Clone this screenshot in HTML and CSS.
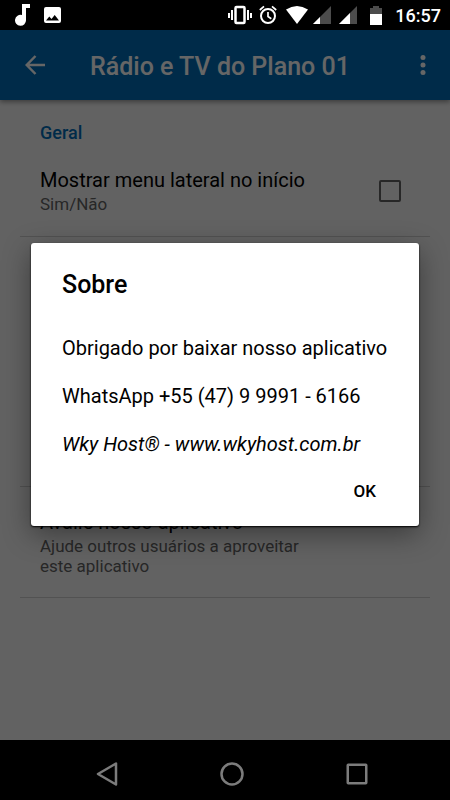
FILE: index.html
```html
<!DOCTYPE html>
<html lang="pt-BR">
<head>
<meta charset="utf-8">
<meta name="viewport" content="width=device-width, initial-scale=1">
<title>Rádio e TV do Plano 01</title>
<link rel="stylesheet" href="styles.css">
</head>
<body>
<div class="status">
  <svg class="note" width="16" height="22" viewBox="0 0 16 22"><path fill="#fff" d="M7 0h8v4h-4v12a5.500 5.500 0 1 1-4-5z"/></svg>
  <svg class="photo" width="17" height="17" viewBox="0 0 17 17"><path fill="#fff" fill-rule="evenodd" d="M2 0h13q2 0 2 2v12q0 2-2 2H2q-2 0-2-2V2q0-2 2-2zM2 13.500h13l-4.300-5.500-3.200 4-2.200-2.500z"/></svg>
  <span class="grow"></span>
  <svg class="vibrate" width="24" height="20" viewBox="0 0 24 20"><path fill="none" stroke="#fff" stroke-width="2" d="M1 8v5M4 5v10M20 5v10M23 8v5"/><rect x="7.500" y="2" width="9" height="16" rx="1" fill="none" stroke="#fff" stroke-width="2.500"/></svg>
  <svg class="alarm" width="18" height="20" viewBox="0 0 18 20"><g fill="none" stroke="#fff" stroke-width="2"><circle cx="9" cy="11" r="7"/><path d="M.8 5 5 1.400M17.200 5 13 1.400M9 7v4.500l3.300 2.200" stroke-width="1.700"/></g></svg>
  <svg class="wifi" width="22" height="18" viewBox="0 0 22 18"><path fill="#fff" d="M0 3.500Q11-3.500 22 3.500L11 18z"/></svg>
  <svg class="signal" width="18" height="18" viewBox="0 0 18 18"><path fill="#4c4c4c" d="M18 0v18H0z"/><path fill="#fff" d="M7 11v7H0z"/></svg>
  <svg class="signal" width="18" height="18" viewBox="0 0 18 18"><path fill="#4c4c4c" d="M18 0v18H0z"/><path fill="#fff" d="M11 7v11H0z"/></svg>
  <svg class="battery" width="12" height="19" viewBox="0 0 12 19"><path fill="#4c4c4c" d="M3 0h6v2h3v6H0V2h3z"/><path fill="#fff" d="M0 8h12v11H0z"/></svg>
  <time>16:57</time>
</div>
<div class="app">
  <header class="bar">
    <button class="icon" aria-label="Voltar"><svg width="20" height="20" viewBox="0 0 20 20"><path fill="none" stroke="#fff" stroke-width="2.500" d="M20 10H2M10.500 1 1.700 10l8.800 9"/></svg></button>
    <h1>Rádio e TV do Plano 01</h1>
    <button class="icon" aria-label="Mais opções"><svg width="6" height="20" viewBox="0 0 6 20"><g fill="#fff"><circle cx="3" cy="2.500" r="2.500"/><circle cx="3" cy="10" r="2.500"/><circle cx="3" cy="17.500" r="2.500"/></g></svg></button>
  </header>
  <main>
    <h2>Geral</h2>
    <label class="row toggle" for="menu">
      <span><span class="name">Mostrar menu lateral no início</span><span class="hint">Sim/Não</span></span>
      <input type="checkbox" id="menu">
    </label>
    <div class="row spacer"></div>
    <div class="row">
      <span class="name">Avalie nosso aplicativo</span>
      <span class="hint">Ajude outros usuários a aproveitar este aplicativo</span>
    </div>
  </main>
  <div class="scrim">
    <section class="dialog" role="dialog" aria-labelledby="about">
      <h2 id="about">Sobre</h2>
      <p>Obrigado por baixar nosso aplicativo</p>
      <p>WhatsApp +55 (47) 9 9991 - 6166</p>
      <p><em>Wky Host® - www.wkyhost.com.br</em></p>
      <div class="actions"><button>OK</button></div>
    </section>
  </div>
</div>
<nav class="keys">
  <button aria-label="Voltar"><svg width="24" height="26" viewBox="0 0 24 26"><path fill="none" stroke="#7c7c7c" stroke-width="2.500" stroke-linejoin="round" d="M21 2.500v21L3 13z"/></svg></button>
  <button aria-label="Início"><svg width="24" height="24" viewBox="0 0 24 24"><circle cx="12" cy="12" r="10.500" fill="none" stroke="#7c7c7c" stroke-width="2.500"/></svg></button>
  <button aria-label="Recentes"><svg width="22" height="22" viewBox="0 0 22 22"><rect x="1.750" y="1.750" width="18.500" height="18.500" rx=".5" fill="none" stroke="#7c7c7c" stroke-width="2.500"/></svg></button>
</nav>
</body>
</html>
```
FILE: styles.css
```css
* { box-sizing: border-box; }
body {
  margin: 0;
  min-height: 100vh;
  display: flex;
  flex-direction: column;
  background: #000;
  color: #000;
  font-family: Roboto, sans-serif;
}
h1, h2, p { margin: 0; font-weight: 500; }
button { border: 0; padding: 0; background: none; font: inherit; color: inherit; }
svg { display: block; flex: none; }

.status {
  height: 30px;
  padding: 0 9px 0 15px;
  display: flex;
  align-items: center;
  color: #fff;
}
.photo { margin-left: 13px; }
.grow { flex: 1; }
.alarm { margin-left: 7px; }
.wifi { margin-left: 9px; }
.signal { margin-left: 5px; }
.signal + .signal { margin-left: 8px; }
.battery { margin-left: 13px; }
.status time { margin-left: 13px; font-size: 18px; font-weight: 500; }

.app {
  flex: 1;
  position: relative;
  background: #f6f6f6;
}
.bar {
  height: 70px;
  padding: 0 20px 0 25px;
  display: flex;
  align-items: center;
  background: #006cb7;
  color: #fff;
  box-shadow: 0 2px 5px rgba(0, 0, 0, .4);
}
.icon { min-width: 15px; display: flex; justify-content: center; }
.bar h1 { flex: 1; margin-left: 45px; padding-top: 3px; font-size: 25px; line-height: 30px; }

main { padding: 21px 20px; }
main h2 {
  padding: 0 20px;
  font-size: 18px;
  line-height: 24px;
  color: #006cb7;
}
.row {
  padding: 22px 20px 21px;
  border-bottom: 1px solid #ccc;
}
.toggle { display: flex; align-items: center; justify-content: space-between; }
.spacer { height: 250px; }
.name, .hint { display: block; }
.name { font-size: 20px; line-height: 26px; }
.hint { max-width: 280px; padding-top: 1px; font-size: 17px; line-height: 20px; color: #636363; }
.toggle .hint { padding-bottom: 1px; }
.toggle input {
  appearance: none;
  width: 22px;
  height: 22px;
  margin: 0 9px 0 0;
  border: 2px solid #636363;
  border-radius: 2px;
}

.scrim {
  position: absolute;
  inset: 0;
  padding: 0 31px 1px;
  display: flex;
  align-items: center;
  background: rgba(0, 0, 0, .6);
}
.dialog {
  flex: 1;
  padding: 27px 30px 21px 31px;
  background: #fff;
  border-radius: 3px;
  box-shadow: 0 1px 2px #000, 0 8px 28px rgba(0, 0, 0, .4);
}
.dialog h2 { margin-bottom: 36px; font-size: 25px; line-height: 30px; }
.dialog p { margin-bottom: 24px; font-size: 20px; line-height: 24px; font-weight: 400; }
.dialog p:last-of-type { margin-bottom: 21px; }
.actions { display: flex; justify-content: flex-end; padding-right: 13px; }
.actions button { font-size: 17px; line-height: 28px; font-weight: 500; }

.keys {
  height: 60px;
  padding: 8px 31px 0 44px;
  display: flex;
  align-items: center;
}
.keys button { flex: 1; display: flex; justify-content: center; }
```
